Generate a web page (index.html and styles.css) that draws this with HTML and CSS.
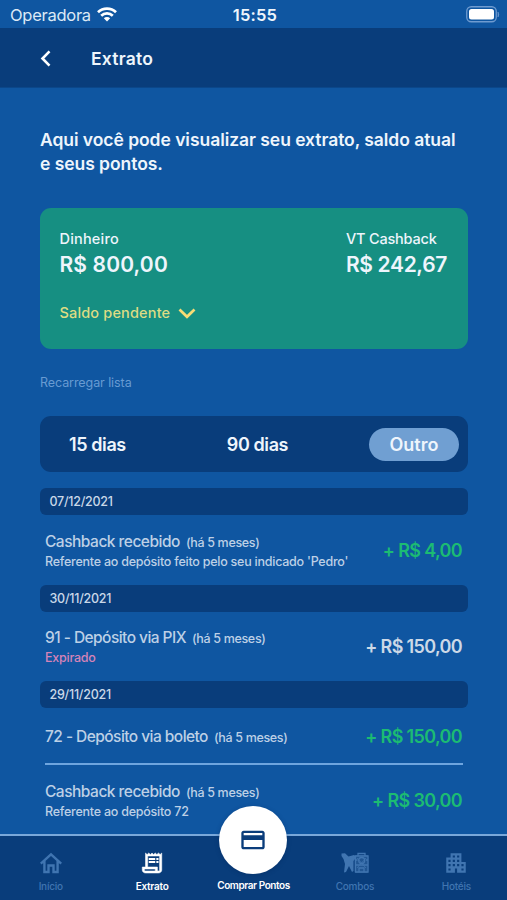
FILE: index.html
```html
<!DOCTYPE html>
<html lang="pt-BR">
<head>
<meta charset="utf-8">
<title>Extrato</title>
<link rel="stylesheet" href="styles.css">
</head>
<body>
<div class="app">
  <div class="status">
    <div class="carrier"><span class="carrier-name">Operadora</span>
      <svg width="20" height="15" viewBox="0 0 20 15" fill="none" stroke="#fff" stroke-width="2.7"><path d="M1 5.3a12.8 12.8 0 0 1 18 0M4.2 8.8a8.3 8.3 0 0 1 11.6 0"/><path d="M6.8 11.2a4.6 4.6 0 0 1 6.4 0L10 14.6z" fill="#fff" stroke="none"/></svg>
    </div>
    <span class="clock">15:55</span>
    <svg class="battery" width="34" height="17" viewBox="0 0 34 17"><rect x=".75" y=".75" width="29.5" height="15" rx="4.5" fill="none" stroke="#6f9bd0" stroke-width="1.3"/><rect x="3" y="3" width="25" height="10.5" rx="2.5" fill="#fff"/><path d="M32 6v5q1.5-2.5 0-5z" fill="#6f9bd0" stroke="#6f9bd0" stroke-width=".6"/></svg>
  </div>
  <header class="header">
    <svg width="12" height="17" viewBox="0 0 12 17" fill="none" stroke="#fff" stroke-width="2.6"><path d="M10.500 1.400 3.500 8.500l7 7.100"/></svg>
    <h1 class="title">Extrato</h1>
  </header>
  <main class="main">
    <p class="intro">Aqui você pode visualizar seu extrato, saldo atual<br>e seus pontos.</p>
    <section class="card">
      <div class="balances">
        <div><div class="label">Dinheiro</div><div class="value">R$ 800,00</div></div>
        <div class="cashback"><div class="label label-tight">VT Cashback</div><div class="value value-tight">R$ 242,67</div></div>
      </div>
      <div class="pending"><span>Saldo pendente</span><svg width="18" height="11" viewBox="0 0 18 11" fill="none" stroke="#f7dc75" stroke-width="2.7"><path d="m1.5 1.5 7.5 7.3 7.5-7.3"/></svg></div>
    </section>
    <div class="reload"><span>Recarregar lista</span></div>
    <div class="tabs"><span class="tab">15 dias</span><span class="tab tab-mid">90 dias</span><span class="tab-active">Outro</span></div>
    <div class="date">07/12/2021</div>
    <div class="entry">
      <div class="info"><div class="name"><span class="nm-cash">Cashback recebido</span><small>(há 5 meses)</small></div><div class="sub">Referente ao depósito feito pelo seu indicado 'Pedro'</div></div>
      <div class="amount">+ R$ 4,00</div>
    </div>
    <div class="date date-tight">30/11/2021</div>
    <div class="entry">
      <div class="info"><div class="name"><span class="nm-dep">91 - Depósito via PIX</span><small>(há 5 meses)</small></div><div class="sub expired">Expirado</div></div>
      <div class="amount neutral">+ R$ 150,00</div>
    </div>
    <div class="date date-tight">29/11/2021</div>
    <div class="entry entry-single">
      <div class="info"><div class="name"><span class="nm-dep">72 - Depósito via boleto</span><small>(há 5 meses)</small></div></div>
      <div class="amount">+ R$ 150,00</div>
    </div>
    <div class="entry entry-last">
      <div class="info"><div class="name"><span class="nm-cash">Cashback recebido</span><small>(há 5 meses)</small></div><div class="sub">Referente ao depósito 72</div></div>
      <div class="amount">+ R$ 30,00</div>
    </div>
  </main>
  <nav class="nav">
    <div class="item">
      <svg width="24" height="24" viewBox="0 0 24 24" fill="none" stroke="currentColor" stroke-width="2.4"><path d="M1.8 12.6 12 3.4l10.2 9.2M5.4 10v11h4.1v-6.5h5V21h4.1V10"/></svg>
      <span>Início</span>
    </div>
    <div class="item on">
      <svg width="26" height="24" viewBox="0 0 24 24" preserveAspectRatio="none"><path d="M19.5 3.5 18 2l-1.5 1.5L15 2l-1.5 1.5L12 2l-1.5 1.5L9 2 7.5 3.5 6 2v14H3v3c0 1.66 1.34 3 3 3h12c1.66 0 3-1.34 3-3V2l-1.5 1.5zM15 20H6c-.55 0-1-.45-1-1v-1h10v2zm4-1c0 .55-.45 1-1 1s-1-.45-1-1v-3H8V5h11v14z" fill="currentColor" stroke="currentColor" stroke-width=".5"/><path d="M9 7h6v2H9zM16 7h2v2h-2zM9 10h6v2H9zM16 10h2v2h-2z" fill="currentColor"/></svg>
      <span>Extrato</span>
    </div>
    <div class="item on center">
      <div class="fab"><svg width="28" height="28" viewBox="0 0 24 24"><path d="M20 4H4c-1.11 0-1.99.89-1.99 2L2 18c0 1.11.89 2 2 2h16c1.11 0 2-.89 2-2V6c0-1.11-.89-2-2-2zm0 14H4v-6h16v6zm0-10H4V6h16v2z" fill="#0a3d7b"/></svg></div>
      <span>Comprar Pontos</span>
    </div>
    <div class="item">
      <svg width="28" height="24" viewBox="0 0 28 24"><path d="M.5 2.5 4 2.200l3.500 3.300L13 4l1.500 1-.5 3-1.500 2v10l-1.500 1-3-6-3 6-2 .5 1-8.500-1.500-5-2-3z" fill="currentColor"/><rect x="13.500" y="4" width="14" height="18" rx="2" fill="currentColor" opacity=".45"/><g fill="none" stroke="currentColor" stroke-width="1.300"><path d="M14.500 5h12.500v16H14.500zM17 4.500V2.500h7v2M14.500 9h2M25 9h2M14.500 14h12.500M18 21v-4h5v4"/><circle cx="20.700" cy="9.500" r="3"/><path d="m16 17 9-10M16 7l9 10" stroke-width=".8"/></g></svg>
      <span>Combos</span>
    </div>
    <div class="item">
      <svg width="28" height="26" viewBox="0 0 24 24" class="hotel"><path fill="currentColor" d="M17 11V3H7v4H3v14h8v-4h2v4h8V11h-4zM7 19H5v-2h2v2zm0-4H5v-2h2v2zm0-4H5V9h2v2zm4 4H9v-2h2v2zm0-4H9V9h2v2zm0-4H9V5h2v2zm4 8h-2v-2h2v2zm0-4h-2V9h2v2zm0-4h-2V5h2v2zm4 12h-2v-2h2v2zm0-4h-2v-2h2v2z"/></svg>
      <span>Hotéis</span>
    </div>
  </nav>
</div>
</body>
</html>
```

FILE: styles.css
```css
* { box-sizing: border-box; }
body { margin: 0; background: #0f56a1; font-family: Inter, sans-serif; color: #eef5fc; }
.app { width: 507px; height: 900px; display: flex; flex-direction: column; overflow: hidden; }
svg { display: block; flex: none; }
span { white-space: nowrap; }
.status { height: 28px; flex: none; display: grid; grid-template-columns: 1fr auto 1fr; align-items: center; padding: 1px 7px 0 10px; }
.carrier { display: flex; gap: 6px; align-items: center; font-size: 16.5px; letter-spacing: -.27px; color: #dce9f6; }
.clock { font-size: 16.5px; font-weight: 600; letter-spacing: .2px; }
.battery { justify-self: end; }
.header { height: 60px; flex: none; background: #093d7b; border-bottom: 1px solid #0b478a; display: flex; align-items: center; padding: 1px 0 0 39px; gap: 40px; }
.title { margin: 0; font-size: 17.5px; font-weight: 600; letter-spacing: .25px; }
.main { flex: 1; min-height: 0; padding: 40px 39px 0 40px; }
.intro { margin: 0 0 32px; font-size: 17.5px; line-height: 24px; font-weight: 600; letter-spacing: -.05px; white-space: nowrap; }
.card { height: 141px; background: #168f82; border-radius: 11px; padding: 20px 20px 0 19.5px; }
.balances { display: flex; justify-content: space-between; }
.cashback { width: 102px; }
.label { font-size: 14.5px; line-height: 22px; font-weight: 500; letter-spacing: .2px; white-space: nowrap; }
.label-tight { letter-spacing: -.2px; }
.value { font-size: 21px; line-height: 30px; font-weight: 600; letter-spacing: .15px; white-space: nowrap; }
.value-tight { letter-spacing: -.35px; }
.pending { display: flex; align-items: center; gap: 8px; margin-top: 22px; font-size: 14.5px; line-height: 22px; font-weight: 500; letter-spacing: .16px; color: #dedc84; }
.reload { margin-top: 24px; height: 20px; line-height: 20px; font-size: 12.5px; letter-spacing: -.08px; color: #689bd2; }
.tabs { margin-top: 23px; height: 56px; background: #093d7b; border-radius: 11px; display: flex; align-items: center; justify-content: space-between; padding: 0 9px 0 29px; font-size: 18px; font-weight: 600; }
.tab { letter-spacing: -.4px; }
.tab-active { width: 90px; height: 33px; line-height: 33px; text-align: center; border-radius: 17px; background: #709fd2; }
.tab-mid { margin-left: 20px; }
.date { margin-top: 16px; height: 27px; line-height: 28px; background: #093d7b; border-radius: 6px; padding-left: 9.5px; font-size: 12.5px; font-weight: 500; letter-spacing: -.25px; color: #c9d8e8; }
.date-tight { margin-top: 0; }
.entry { height: 69.5px; padding: 2px 6px 0 5px; display: flex; justify-content: space-between; align-items: center; color: #bdd0e6; }
.entry-single { height: 57px; margin: 0 5px; padding: 2px 1px 0 0; border-bottom: 2px solid #6ea5df; }
.entry-last { height: 72px; padding-top: 0; }
.name { font-size: 15.5px; line-height: 20px; font-weight: 500; display: flex; align-items: baseline; gap: 6px; white-space: nowrap; }
.nm-cash { letter-spacing: -.5px; }
.nm-dep { letter-spacing: -.55px; }
.name small { font-size: 12.5px; letter-spacing: -.33px; }
.info { padding-top: 1px; }
.sub { font-size: 12.5px; line-height: 18px; font-weight: 500; letter-spacing: -.24px; white-space: nowrap; }
.expired { color: #d583b8; }
.amount { font-size: 18px; line-height: 24px; font-weight: 600; letter-spacing: -.65px; color: #1cbb73; white-space: nowrap; }
.neutral { color: #ccd9e7; }
.nav { height: 66px; flex: none; background: #093d7b; border-top: 2px solid #79a8da; display: grid; grid-template-columns: repeat(5, 1fr); }
.item { display: flex; flex-direction: column; align-items: center; padding-top: 15px; color: #4075b1; font-size: 10px; line-height: 14px; font-weight: 500; letter-spacing: -.25px; }
.item span { margin-top: 4px; }
.hotel { margin: -1px 0; }
.on { color: #fff; font-weight: 600; }
.center { padding: 0; letter-spacing: -.42px; }
.fab { width: 68px; height: 68px; margin-top: -30px; border-radius: 50%; background: #fff; display: flex; align-items: center; justify-content: center; flex: none; box-shadow: 0 1px 4px #06285a66; }
```
